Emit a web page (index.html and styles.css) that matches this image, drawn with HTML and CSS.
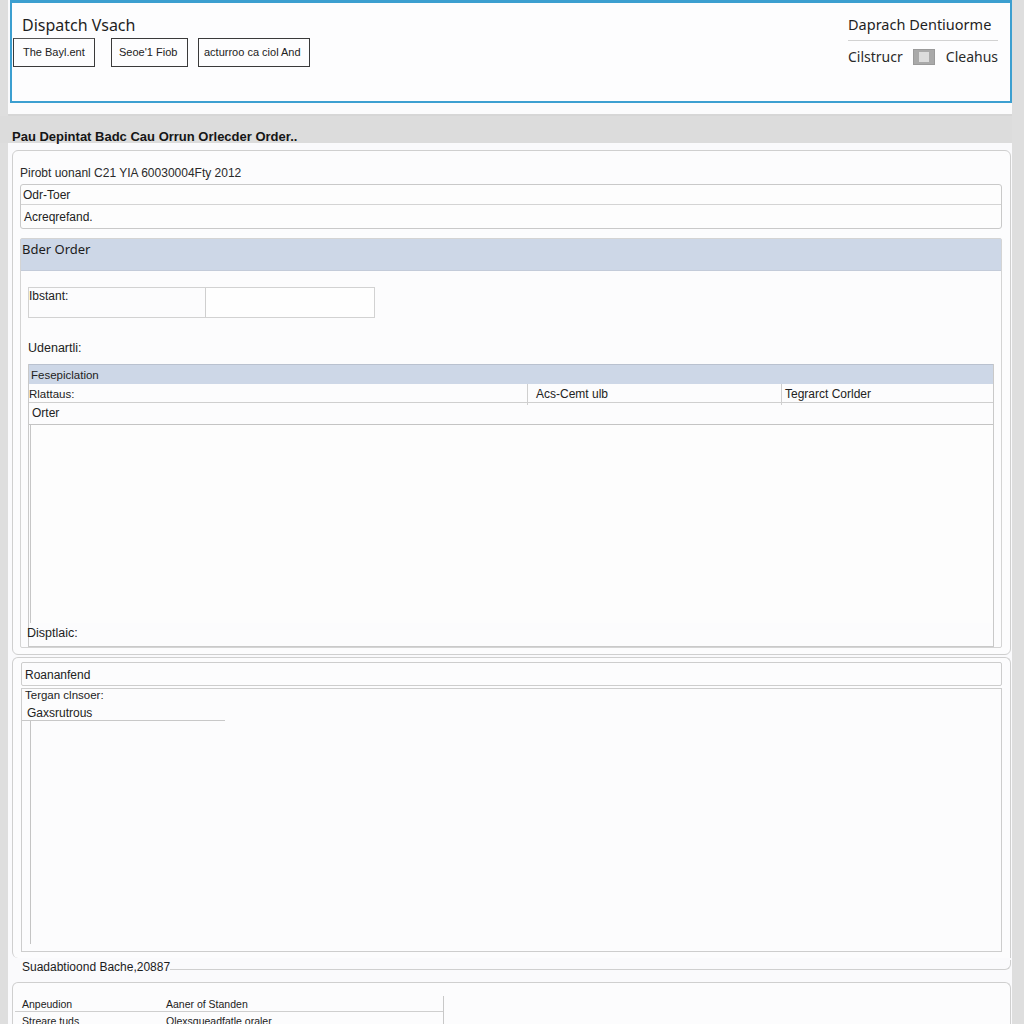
FILE: index.html
```html
<!DOCTYPE html>
<html>
<head>
<meta charset="utf-8">
<link rel="stylesheet" href="styles.css">
</head>
<body>
<div class="page">
  <header class="header">
    <div class="header-left">
      <div class="app-title">Dispatch Vsach</div>
      <div class="btn-row">
        <div class="btn btn-a">The Bayl.ent</div>
        <div class="btn btn-b">Seoe'1 Fiob</div>
        <div class="btn btn-c">acturroo ca ciol And</div>
      </div>
    </div>
    <div class="header-right">
      <div class="user-title">Daprach Dentiuorme</div>
      <div class="user-row">
        <span>Cilstrucr</span>
        <span class="toggle"><span class="toggle-knob"></span></span>
        <span>Cleahus</span>
      </div>
    </div>
  </header>
  <div class="header-gap"></div>
  <div class="titlebar"><span>Pau Depintat Badc Cau Orrun Orlecder Order..</span></div>

  <main class="content">
    <section class="card card-main">
      <div class="meta">Pirobt uonanl C21 YIA 60030004Fty 2012</div>
      <div class="info-box">
        <div class="info-row info-row-1">Odr-Toer</div>
        <div class="info-row info-row-2">Acreqrefand.</div>
      </div>

      <div class="section">
        <div class="section-band">Bder Order</div>
        <div class="section-body">
          <div class="field">
            <div class="field-label">Ibstant:</div>
            <div class="field-input"></div>
          </div>
          <div class="sub-label">Udenartli:</div>
          <div class="table">
            <div class="table-head">Fesepiclation</div>
            <div class="table-row cols">
              <div class="c1">Rlattaus:</div>
              <div class="c2">Acs-Cemt ulb</div>
              <div class="c3">Tegrarct Corlder</div>
            </div>
            <div class="table-row row-order">Orter</div>
            <div class="table-empty"></div>
            <div class="table-foot">Disptlaic:</div>
          </div>
        </div>
      </div>
    </section>

    <section class="card card-second">
      <div class="row-box">Roananfend</div>
      <div class="big-box">
        <div class="small-line">Tergan clnsoer:</div>
        <div class="underlined">Gaxsrutrous</div>
        <div class="big-inner"></div>
      </div>
    </section>
    <div class="legend-row">
      <span class="legend-text">Suadabtioond Bache,20887</span>
      <span class="legend-rule"></span>
    </div>

    <section class="card card-third">
      <div class="mini-table">
        <div class="mini-row mini-head">
          <div class="m1">Anpeudion</div>
          <div class="m2">Aaner of Standen</div>
        </div>
        <div class="mini-row">
          <div class="m1">Streare tuds</div>
          <div class="m2">Olexsqueadfatle oraler</div>
        </div>
      </div>
    </section>
  </main>
</div>
</body>
</html>
```

FILE: styles.css
```css
* { box-sizing: border-box; }

html, body {
  margin: 0;
  padding: 0;
}

body {
  background: #dedede;
  font-family: "Liberation Sans", Arial, sans-serif;
  font-size: 12px;
  color: #222;
  height: 1024px;
  overflow: hidden;
}

.page {
  margin-left: 8px;
  width: 1004px;
  background: #fafafc;
  min-height: 1024px;
}

/* ---------- header ---------- */
.header {
  margin-left: 2px;
  height: 103px;
  border: 2px solid #3c9fd0;
  border-top-width: 3px;
  background: #fdfdfe;
  display: flex;
  justify-content: space-between;
  padding-right: 12px;
}

.header-left {
  display: flex;
  flex-direction: column;
}

.app-title {
  font-family: "Noto Sans", "Open Sans", sans-serif;
  font-size: 16px;
  line-height: 20px;
  margin: 12px 0 0 10px;
  color: #1f1f1f;
}

.btn-row {
  display: flex;
  margin: 3px 0 0 1px;
}

.btn {
  height: 29px;
  border: 1px solid #3a3a3a;
  font-size: 11px;
  line-height: 27px;
  color: #222;
  white-space: nowrap;
}

.btn-a { width: 82px; padding-left: 9px; border-top-color: #555; }
.btn-b { width: 77px; padding-left: 7px; margin-left: 16px; }
.btn-c { width: 112px; padding-left: 5px; margin-left: 10px; }

.header-right {
  width: 150px;
  display: flex;
  flex-direction: column;
  padding-top: 11px;
}

.user-title {
  font-family: "Noto Sans", "Open Sans", sans-serif;
  font-size: 14.5px;
  line-height: 20px;
  color: #1f1f1f;
  padding-bottom: 6px;
  border-bottom: 1px solid #d2d2d2;
  white-space: nowrap;
}

.user-row {
  display: flex;
  align-items: center;
  margin-top: 6px;
  font-family: "Noto Sans", "Open Sans", sans-serif;
  font-size: 14px;
  color: #2a2a2a;
  white-space: nowrap;
}

.toggle {
  width: 22px;
  height: 16px;
  margin: 0 11px 0 10px;
  background: #a9a9a9;
  border: 1px solid #9a9a9a;
  display: flex;
  align-items: center;
  justify-content: center;
}

.toggle-knob {
  width: 10px;
  height: 10px;
  background: #dcdcdc;
}

.header-gap {
  height: 13px;
  background: #fbfbfc;
  border-bottom: 2px solid #d6d6d6;
}

.titlebar {
  height: 27px;
  background: #dcdcdc;
  display: flex;
  align-items: flex-end;
  font-weight: bold;
  font-size: 13px;
  line-height: 10px;
  color: #151515;
  margin-left: -8px;
  padding: 0 0 1px 12px;
}

/* ---------- content ---------- */
.content {
  padding: 7px 1px 0 4px;
  background: #fafafc;
}

.card {
  border: 1px solid #cfcfcf;
  border-radius: 6px;
  background: #fcfcfd;
}

.card-main {
  padding: 14px 8px 6px 7px;
}

.meta {
  line-height: 16px;
  font-size: 12px;
  color: #2a2a2a;
}

.info-box {
  margin-top: 3px;
  border: 1px solid #c9c9c9;
  border-radius: 3px;
  background: #fdfdfd;
}

.info-row {
  font-size: 12px;
  padding-left: 2px;
}

.info-row-1 {
  height: 20px;
  line-height: 20px;
  border-bottom: 1px solid #d4d4d4;
}

.info-row-2 {
  height: 23px;
  line-height: 24px;
  padding-left: 3px;
}

.section {
  margin-top: 9px;
  height: 410px;
  border: 1px solid #d4d4d4;
  border-radius: 2px;
  display: flex;
  flex-direction: column;
}

.section-band {
  height: 32px;
  background: #cdd7e7;
  border-bottom: 1px solid #c3cbd9;
  font-family: "Noto Sans", "Open Sans", sans-serif;
  font-size: 13px;
  line-height: 20px;
  padding: 0 0 0 1px;
  color: #1c1c1c;
}

.section-body {
  flex: 1;
  display: flex;
  flex-direction: column;
  padding: 0 7px 0 7px;
}

.field {
  margin-top: 16px;
  width: 347px;
  height: 31px;
  border: 1px solid #d2d2d2;
  display: grid;
  grid-template-columns: 176px 1fr;
}

.field-label {
  padding: 1px 0 0 0;
  line-height: 14px;
  font-size: 12px;
}

.field-input {
  border-left: 1px solid #cfcfcf;
  background: #fefefe;
}

.sub-label {
  margin-top: 23px;
  font-size: 12.5px;
  line-height: 14px;
}

.table {
  margin-top: 9px;
  flex: 1;
  border: 1px solid #c9c9c9;
  border-top: none;
  display: flex;
  flex-direction: column;
}

.table-head {
  height: 20px;
  background: #cdd7e7;
  border-top: 1px solid #b9c1cf;
  line-height: 21px;
  font-size: 11.5px;
  padding-left: 2px;
}

.table-row {
  font-size: 12px;
}

.cols {
  display: grid;
  grid-template-columns: 498px 254px 1fr;
  height: 19px;
  line-height: 21px;
  border-bottom: 1px solid #cfcfcf;
}

.cols .c1 { font-size: 11.5px; }
.cols .c2 { border-left: 1px solid #cfcfcf; padding-left: 8px; }
.cols .c3 { border-left: 1px solid #cfcfcf; padding-left: 3px; }

.row-order {
  height: 22px;
  line-height: 21px;
  padding-left: 3px;
  border-bottom: 1px solid #c4c4c4;
}

.table-empty {
  flex: 1;
  margin-left: 1px;
  border-left: 1px solid #c6c6c6;
  background: #fdfdfd;
}

.table-foot {
  height: 23px;
  line-height: 20px;
  margin-left: -2px;
  font-size: 12.5px;
}

/* ---------- second card ---------- */
.card-second {
  margin-top: 2px;
  padding: 4px 8px 6px 8px;
  border-bottom: none;
  border-radius: 6px 6px 0 6px;
}

.row-box {
  height: 24px;
  border: 1px solid #cdcdcd;
  border-radius: 2px;
  line-height: 24px;
  padding-left: 3px;
  font-size: 12px;
}

.big-box {
  margin-top: 2px;
  height: 264px;
  border: 1px solid #cdcdcd;
  display: flex;
  flex-direction: column;
  padding-bottom: 7px;
}

.small-line {
  font-size: 11.5px;
  line-height: 12px;
  padding-left: 3px;
}

.underlined {
  width: 203px;
  margin-top: 5px;
  padding-left: 5px;
  font-size: 12px;
  line-height: 14px;
  border-bottom: 1px solid #c8c8c8;
}

.big-inner {
  flex: 1;
  margin-left: 8px;
  border-left: 1px solid #c4c4c4;
}

.legend-row {
  display: flex;
  align-items: center;
  height: 14px;
  margin-top: 2px;
}

.legend-text {
  font-size: 12px;
  padding-left: 10px;
  white-space: nowrap;
  color: #1c1c1c;
}

.legend-rule {
  flex: 1;
  height: 10px;
  margin-top: -5px;
  border-bottom: 1px solid #cfcfcf;
  border-right: 1px solid #cfcfcf;
  border-bottom-right-radius: 6px;
}

/* ---------- third card ---------- */
.card-third {
  margin-top: 8px;
  height: 60px;
  border-bottom: none;
  border-radius: 6px 6px 0 0;
  padding: 13px 0 0 2px;
}

.mini-table {
  width: 429px;
  border-right: 1px solid #c8c8c8;
}

.mini-row {
  display: grid;
  grid-template-columns: 144px 1fr;
  font-size: 10.5px;
  height: 18px;
  line-height: 18px;
}

.mini-head {
  height: 16px;
  line-height: 16px;
  border-bottom: 1px solid #cfcfcf;
}

.m1 { padding-left: 7px; }
.m2 { padding-left: 7px; }
```
